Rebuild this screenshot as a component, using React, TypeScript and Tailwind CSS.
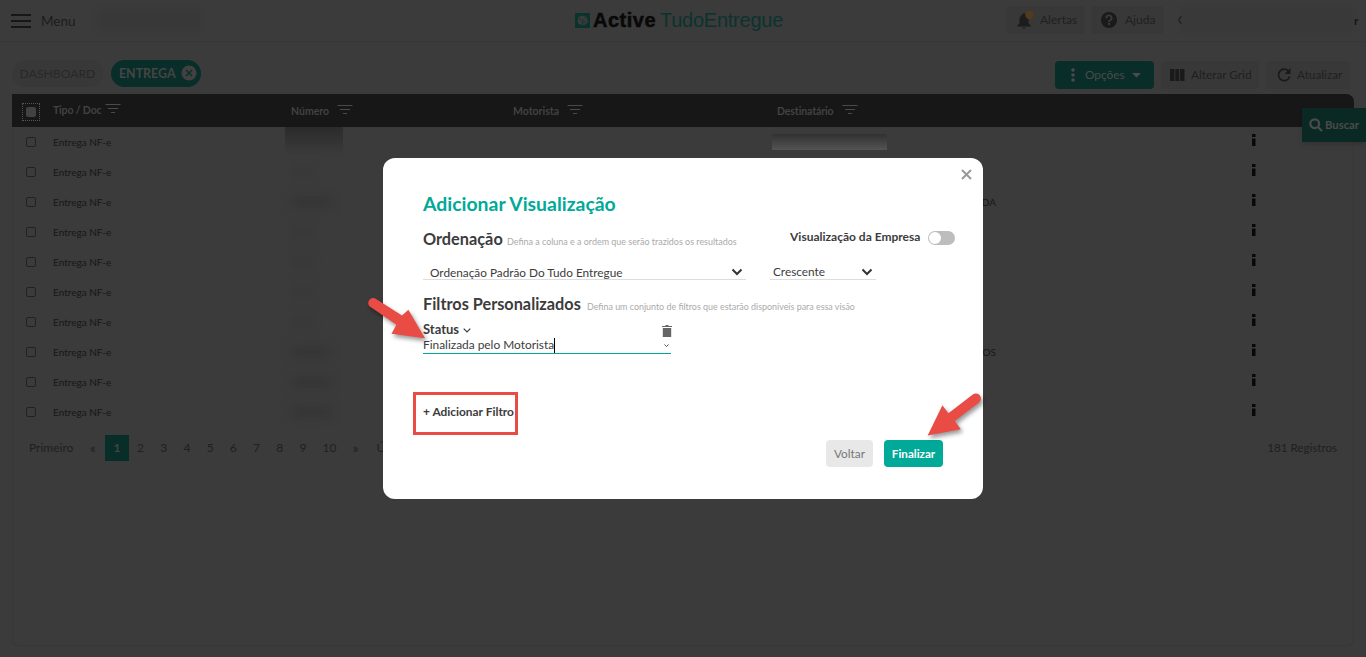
import type { ReactNode } from "react";
import clsx from "clsx";

const rows = [
  { number: 0, recipient: "" },
  { number: 1, recipient: "" },
  { number: 2, recipient: "LTDA" },
  { number: 1, recipient: "" },
  { number: 1, recipient: "" },
  { number: 1, recipient: "" },
  { number: 1, recipient: "" },
  { number: 2, recipient: "SANTOS" },
  { number: 2, recipient: "" },
  { number: 2, recipient: "" },
];

const pages = ["2", "3", "4", "5", "6", "7", "8", "9"];

const columns =
  "grid grid-cols-[41px_238px_222px_264px_219px_255px_1fr] items-center";

function FilterIcon() {
  return (
    <svg width="16" height="11" viewBox="0 0 16 11" stroke="#4a4a4a" fill="none">
      <path d="M0.5 1.5H15.5M3 5.5H13M6 9.5H10" />
    </svg>
  );
}

function Chevron() {
  return (
    <svg width="12" height="8" viewBox="0 0 12 8" fill="none" stroke="#333" strokeWidth="2">
      <path d="M1.5 1.5L6 6L10.5 1.5" />
    </svg>
  );
}

function HeaderCell({ label, className }: { label: string; className?: string }) {
  return (
    <div className="flex items-center gap-[8px]">
      <span className={clsx("text-[10.5px] font-bold", className)}>{label}</span>
      <span className="-mt-1">
        <FilterIcon />
      </span>
    </div>
  );
}

function ToolButton({ children, className }: { children: ReactNode; className: string }) {
  return (
    <button className={clsx("flex h-7 items-center rounded bg-[#383838] text-[12px] text-[#202020]", className)}>
      {children}
    </button>
  );
}

function TopBar() {
  return (
    <header className="flex h-[42px] items-center border-b border-[#373737] pb-px">
      <svg className="mt-px ml-[11px]" width="20" height="14" viewBox="0 0 20 14" stroke="#171717" strokeWidth="2">
        <path d="M0 1H20M0 7H20M0 13H20" />
      </svg>
      <span className="mt-[3px] ml-[10px] w-[56px] text-[13.5px] text-[#1b1b1b]">Menu</span>
      <div className="h-[18px] w-[104px] rounded bg-[#383838] blur-[3px]" />
      <div className="ml-[374px] flex h-5 w-[209px] items-center">
        <svg width="15" height="15" viewBox="0 0 15 15">
          <rect width="15" height="15" fill="#0b332e" />
          <path d="M3.5 4L7.5 2.5L11.5 4L13 9L9 12.5L3.5 11L2.5 8Z" fill="#3b3b3b" />
          <path d="M4 5.5L7.5 7.5L10.5 4.5M7.5 7.5V12M7.5 9.5L11 8.5" stroke="#0b332e" fill="none" strokeWidth="0.8" />
        </svg>
        <span className="ml-[3px] w-[67px] font-['Liberation_Sans'] text-[20px] font-bold tracking-[0.5px] text-[#080808] [-webkit-text-stroke:0.5px_#080808]">
          Active
        </span>
        <span className="font-['Liberation_Sans'] text-[20px] tracking-[-0.25px] text-[#0b332e]">TudoEntregue</span>
      </div>
      <ToolButton className="ml-[222px] w-[79px] pl-[10px]">
        <svg width="18" height="18" viewBox="0 0 18 18">
          <path d="M8 2a1.5 1.5 0 0 0-1.2 1.6C4.4 4.3 3.4 6.3 3.4 9v3.5L1 15v.6h14V15l-2.4-2.5V9c0-2.7-1-4.7-3.4-5.4A1.5 1.5 0 0 0 8 2ZM6 16.5h4L8 18Z" fill="#1d1d1d" />
          <circle cx="13.5" cy="4" r="4.2" fill="#523b1c" />
        </svg>
        <span className="ml-[6px]">Alertas</span>
      </ToolButton>
      <ToolButton className="ml-[6px] w-[73px] pl-[10px]">
        <svg width="16" height="16" viewBox="0 0 16 16">
          <circle cx="8" cy="8" r="8" fill="#1a1a1a" />
          <path d="M5.4 6.2a2.6 2.6 0 1 1 3.8 2.1C8.3 8.8 8 9.2 8 10" stroke="#3b3b3b" strokeWidth="1.8" fill="none" />
          <rect x="7" y="11" width="2" height="2" fill="#3b3b3b" />
        </svg>
        <span className="ml-[8px]">Ajuda</span>
      </ToolButton>
      <span className="ml-[14px] text-[12px] text-[#1b1b1b]">C</span>
      <div className="relative -ml-[4px] h-6 w-[170px] bg-[#393939] shadow-[0_0_3px_#393939]" />
      <span className="mt-[2px] ml-[2px] text-[12px] font-bold text-[#171717]">r</span>
    </header>
  );
}

function Toolbar() {
  return (
    <div className="flex h-[52px] items-center pt-[11px] pl-3">
      <span className="flex h-[27px] w-[91px] items-center justify-center rounded-full bg-[#383838] pt-px text-[12.2px] text-[#282828]">
        DASHBOARD
      </span>
      <span className="ml-2 flex h-[27px] w-[90px] items-center rounded-full bg-[#092d28] pl-2 text-[12.4px] font-bold text-[#454545]">
        <span className="w-[62px] pt-[2px]">ENTREGA</span>
        <svg className="-mt-0.5" width="16" height="16" viewBox="0 0 16 16">
          <circle cx="8" cy="8" r="7.6" fill="#414141" />
          <path d="M5 5L11 11M11 5L5 11" stroke="#092d28" strokeWidth="1.3" />
        </svg>
      </span>
      <div className="ml-[854px] flex pt-[3px]">
        <button className="flex h-7 w-[99px] items-center rounded bg-[#092d28] pl-4 text-[11.8px] text-[#4b4b4b]">
          <svg width="4" height="14" viewBox="0 0 4 14" fill="#4b4b4b">
            <circle cx="2" cy="2" r="1.8" />
            <circle cx="2" cy="7" r="1.8" />
            <circle cx="2" cy="12" r="1.8" />
          </svg>
          <span className="-mr-1 ml-[10px] w-[47px] text-left">Opções</span>
          <svg className="ml-1" width="9" height="5" viewBox="0 0 9 5" fill="#4b4b4b">
            <path d="M0 0H9L4.5 4.5Z" />
          </svg>
        </button>
        <ToolButton className="ml-[7px] w-[98px] pl-[9px]">
          <svg width="15" height="12" viewBox="0 0 15 12" fill="#1a1a1a">
            <path d="M0 0H4.4V12H0ZM5.3 0H9.2V12H5.3ZM10.1 0H14.5V12H10.1Z" />
          </svg>
          <span className="ml-[6px] text-[11.8px] whitespace-nowrap">Alterar Grid</span>
        </ToolButton>
        <ToolButton className="ml-[7px] w-[84px] pl-[11px]">
          <svg width="14" height="14" viewBox="0 0 14 14" fill="none" stroke="#1a1a1a" strokeWidth="1.7">
            <path d="M11.8 3.5A5.7 5.7 0 1 0 12.7 8.5" />
            <path d="M13.5 0V6H7.5Z" fill="#1a1a1a" stroke="none" />
          </svg>
          <span className="ml-[6px] text-[11.8px]">Atualizar</span>
        </ToolButton>
      </div>
    </div>
  );
}

function DeliveryTable() {
  return (
    <main className="mx-3 h-[552px] rounded-b-md border-x border-b border-[#373737]">
      <div className={clsx(columns, "-mx-px h-[33px] rounded-tr-[8px] bg-[#171717] pt-[2px] text-[#424242]")}>
        <div className="ml-[10px] flex size-[18px] items-center justify-center border border-dotted border-[#555]">
          <span className="size-[10px] rounded-[2px] bg-[#424242]" />
        </div>
        <div className="-mt-[3px]">
          <HeaderCell label="Tipo / Doc" className="-mr-[4px] tracking-[-0.15px]" />
        </div>
        <HeaderCell label="Número" />
        <HeaderCell label="Motorista" />
        <HeaderCell label="Destinatário" className="tracking-[-0.1px]" />
      </div>
      {rows.map((row, i) => (
        <div key={i} className={clsx(columns, "-mx-px h-[30px] text-[10px] text-[#171717]")}>
          <span className="ml-[14px] size-[10px] rounded-[2px] border border-[#222]" />
          <span>Entrega NF-e</span>
          <span
            className={clsx(
              row.number === 0 && "-ml-1.5 h-[28px] w-[58px] self-start bg-gradient-to-b from-[#2b2b2b] to-[#3b3b3b]",
              row.number === 1 && "h-3 w-6 bg-[#393939] blur-[3px]",
              row.number === 2 && "h-3 w-10 bg-[#363636] blur-[4px]",
            )}
          />
          <span />
          {i === 0 ? (
            <span className="-ml-[5px] h-4 w-[115px] bg-gradient-to-b from-[#313131] to-[#545454]" />
          ) : (
            <span className="text-right">{row.recipient}</span>
          )}
          <span />
          <svg className="-mt-1" width="6" height="14" viewBox="0 0 6 14" fill="#080808">
            <path d="M1 1H4.5V4H1ZM1 5.5H4.5V13H1Z" />
          </svg>
        </div>
      ))}
      <div className="mt-2 flex h-[26px] items-center text-[12px] text-[#202020]">
        <span className="ml-[16px] w-[61px]">Primeiro</span>
        <span className="w-[15px] text-[13px]">«</span>
        <span className="flex h-full w-6 items-center justify-center bg-[#092d28] font-bold text-[#454545]">1</span>
        {pages.map((page) => (
          <span key={page} className="w-[23.2px] text-center">
            {page}
          </span>
        ))}
        <span className="w-[30px] text-center">10</span>
        <span className="w-[22px] text-center text-[13px]">»</span>
        <span className="ml-[10px]">Último</span>
        <span className="mr-[16px] ml-auto text-[11.6px]">181 Registros</span>
      </div>
    </main>
  );
}

function Modal() {
  return (
    <div className="relative h-[341px] w-[600px] rounded-[12px] bg-white px-10 text-[#3c3c3c]">
      <button className="absolute top-[11px] right-[11px]">
        <svg width="11" height="11" viewBox="0 0 11 11" stroke="#999" strokeWidth="2">
          <path d="M1 1L10 10M10 1L1 10" />
        </svg>
      </button>
      <h2 className="pt-[34px] text-[19.4px] leading-6 font-bold text-[#00a998]">Adicionar Visualização</h2>
      <div className="mt-[10px] -mr-4 flex h-7 items-center">
        <h3 className="-mt-px w-[84px] shrink-0 text-[16.3px] font-bold">Ordenação</h3>
        <span className="w-[283px] shrink-0 pt-[5px] text-[8.95px] whitespace-nowrap text-[#aaa]">
          Defina a coluna e a ordem que serão trazidos os resultados
        </span>
        <span className="mb-[6px] w-[138px] shrink-0 text-[12px] font-bold whitespace-nowrap">
          Visualização da Empresa
        </span>
        <span className="-mt-[5px] flex h-[14px] w-[27px] items-center rounded-full bg-[#bdbdbd] px-px">
          <span className="size-3 rounded-full bg-white" />
        </span>
      </div>
      <div className="mt-[10px] flex gap-[24px] text-[11.8px]">
        <div className="flex h-[16px] w-[323px] items-center justify-between border-b border-[#ddd] pr-[3px] pl-[7px]">
          <span className="pt-[2px]">Ordenação Padrão Do Tudo Entregue</span>
          <Chevron />
        </div>
        <div className="flex h-[16px] w-[106px] items-center justify-between border-b border-[#ddd] pr-[3px] pl-[3px]">
          <span>Crescente</span>
          <Chevron />
        </div>
      </div>
      <div className="mt-[11px] flex h-7 items-center">
        <h3 className="-mt-px w-[164px] text-[16.3px] font-bold">Filtros Personalizados</h3>
        <span className="pt-[5px] text-[8.92px] whitespace-nowrap text-[#aaa]">
          Defina um conjunto de filtros que estarão disponíveis para essa visão
        </span>
      </div>
      <div className="mt-[3px] flex h-4 w-[248px] items-center">
        <span className="-mt-[2px] w-[40px] text-[13px] font-bold">Status</span>
        <svg width="8" height="5" viewBox="0 0 8 5" fill="none" stroke="#3c3c3c" strokeWidth="1.2">
          <path d="M0.7 0.7L4 4L7.3 0.7" />
        </svg>
        <svg className="mt-[2px] -mr-px ml-auto" width="10" height="12" viewBox="0 0 10 12" fill="#666">
          <path d="M0 1H3L4 0H6L7 1H10V2H0ZM0.8 3H9.2V12H0.8Z" />
        </svg>
      </div>
      <div className="flex h-4 w-[248px] items-center border-b border-[#00a998] pb-px text-[11.9px]">
        <span className="flex h-[15px] items-center border-r border-black">Finalizada pelo Motorista</span>
        <svg className="mr-[2px] ml-auto" width="5" height="3" viewBox="0 0 5 3" fill="none" stroke="#555">
          <path d="M0.5 0.5L2.5 2.5L4.5 0.5" />
        </svg>
      </div>
      <button className="mt-[50px] block h-4 text-[11.9px] leading-4 font-bold">+ Adicionar Filtro</button>
      <div className="mt-5 flex justify-end gap-[11px] text-[11.8px]">
        <button className="h-[27px] w-[47px] rounded bg-[#e8e8e8] text-[#777]">Voltar</button>
        <button className="h-[27px] w-[59px] rounded bg-[#00a998] text-[11.6px] font-bold text-white">Finalizar</button>
      </div>
    </div>
  );
}

// Callouts drawn over the dialog
function Callouts() {
  return (
    <>
      <div className="absolute top-[392px] left-[413px] h-[43px] w-[105px] border-3 border-[#e94b45]" />
      <svg
        className="absolute inset-0 drop-shadow-[2px_3px_2px_rgba(0,0,0,0.4)]"
        width="1366"
        height="657"
        viewBox="0 0 1366 657"
        fill="#e94b45"
      >
        <path d="M369.5 306.3L396.4 324.8L391.5 333.8L425 338.3L408.4 309.8L402 315.5L375.3 298.5A5 5 0 0 0 369.5 306.3Z" />
        <path d="M972.8 394.6L948.4 413.2L942.4 405.2L927.7 435.6L960.8 429.3L954.8 421L979 402.5A5 5 0 0 0 972.8 394.6Z" />
      </svg>
    </>
  );
}

export default function App() {
  return (
    <div className="relative h-[657px] w-[1366px] overflow-hidden bg-[#3b3b3b] font-[Lato,sans-serif] leading-none">
      <TopBar />
      <Toolbar />
      <DeliveryTable />
      <button className="absolute top-[108px] right-0 flex h-[34px] w-16 items-center bg-[#0a2925] pb-px pl-[7px] text-[11.3px] font-bold text-[#4b4b4b] shadow-md">
        <svg width="14" height="14" viewBox="0 0 14 14" fill="none" stroke="#4b4b4b" strokeWidth="2.2">
          <circle cx="5.7" cy="5.7" r="4.4" />
          <path d="M9 9L13 13" />
        </svg>
        <span className="ml-[2px]">Buscar</span>
      </button>
      <div className="absolute inset-0 flex justify-center pt-[158px]">
        <Modal />
      </div>
      <Callouts />
    </div>
  );
}
